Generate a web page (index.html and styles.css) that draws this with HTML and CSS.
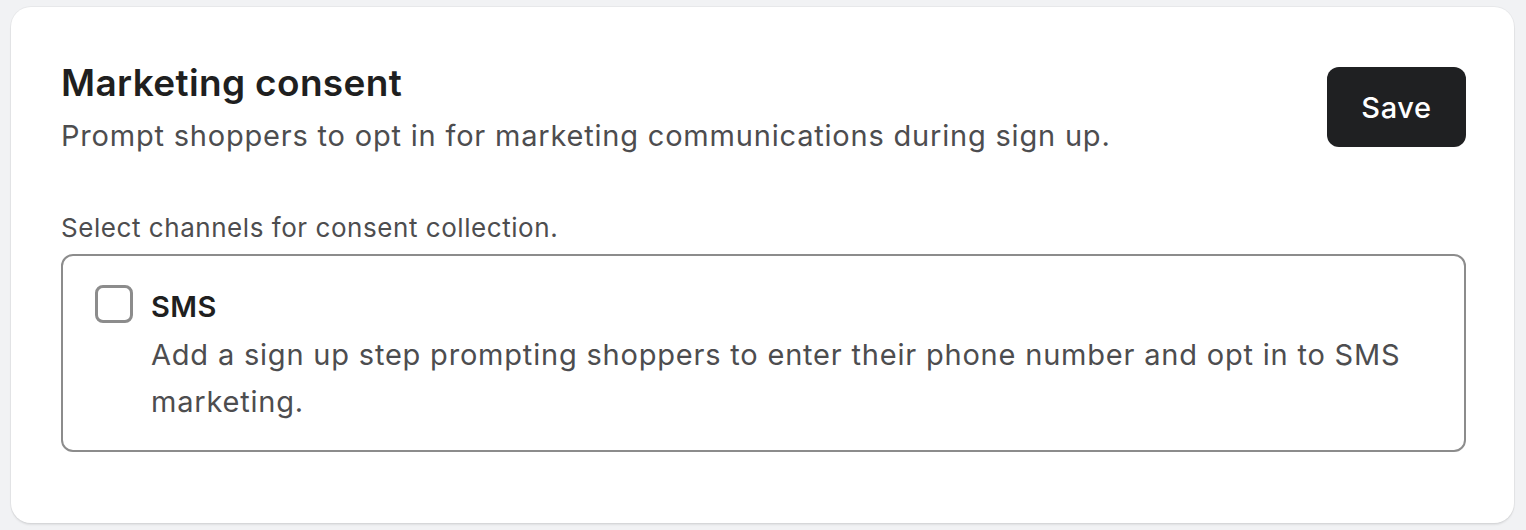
FILE: index.html
```html
<!DOCTYPE html>
<html lang="en">

<head>
    <meta charset="UTF-8">
    <title>Marketing consent</title>
    <link rel="stylesheet" href="styles.css">
</head>

<body>
    <div class="card">
        <div class="card-header">
            <div class="header-text">
                <h2 class="title">Marketing consent</h2>
                <p class="subtitle">Prompt shoppers to opt in for marketing communications during sign up.</p>
            </div>
            <button class="save-btn" type="button">Save</button>
        </div>

        <p class="field-label">Select channels for consent collection.</p>
        <div class="channel-box">
            <label class="channel">
                <span class="checkbox"></span>  <!--empty box, nothing is ticked-->
                <span class="channel-text">
                    <span class="channel-name">SMS</span>
                    <span class="channel-desc">Add a sign up step prompting shoppers to enter their phone number and opt in to SMS marketing.</span>
                </span>
            </label>
        </div>
    </div>
</body>

</html>
```

FILE: styles.css
```css
body {
    margin: 0;
    background-color: #f1f2f4;
    font-family: Inter, "Noto Sans", sans-serif;
    color: #1f1f20;
}

.card {
    margin: 7px 12px 7px 11px;
    padding: 50px 48px 71px 50px;
    background-color: #ffffff;
    border-radius: 20px;
    box-shadow: 0 2px 2px rgba(0, 0, 0, 0.08), 0 0 0 1px rgba(0, 0, 0, 0.04);
}

.card-header {
    display: flex;
    justify-content: space-between;
    align-items: flex-start;
}

.title {
    margin: 4px 0 0 0;
    font-size: 37px;
    line-height: 44px;
    font-weight: 600;
    letter-spacing: 0.35px;
}

.subtitle {
    margin: 11px 0 0 0;
    font-size: 29px;
    line-height: 40px;
    letter-spacing: 0.8px;
    color: #4d4d4f;
}

.save-btn {
    margin-top: 10px;
    width: 139px;
    height: 80px;
    border: none;
    border-radius: 12px;
    background-color: #1f2022;
    color: #ffffff;
    font-family: Inter, "Noto Sans", sans-serif;
    font-size: 29px;
    font-weight: 500;
    letter-spacing: 0.6px;
    cursor: pointer;
}

.field-label {
    margin: 54px 0 8px 0;
    font-size: 26px;
    line-height: 36px;
    letter-spacing: 0.55px;
    color: #4d4d4f;
}

.channel-box {
    border: 2px solid #8c8c8c;
    border-radius: 12px;
    padding: 28px 32px 25px 32px;
}

.channel {
    display: flex;
    align-items: flex-start;
    gap: 18px;
}

.checkbox {
    flex: none;
    box-sizing: border-box;
    width: 38px;
    height: 38px;
    margin-top: 1px;
    border: 3px solid #8c8c8c;
    border-radius: 8px;
}

.channel-text {
    display: flex;
    flex-direction: column;
    padding-top: 3px;
}

.channel-name {
    font-size: 29px;
    line-height: 40px;
    font-weight: 600;
    letter-spacing: 0.5px;
}

.channel-desc {
    margin-top: 4px;
    font-size: 29px;
    line-height: 47px;
    letter-spacing: 0.8px;
    color: #4d4d4f;
}
```
